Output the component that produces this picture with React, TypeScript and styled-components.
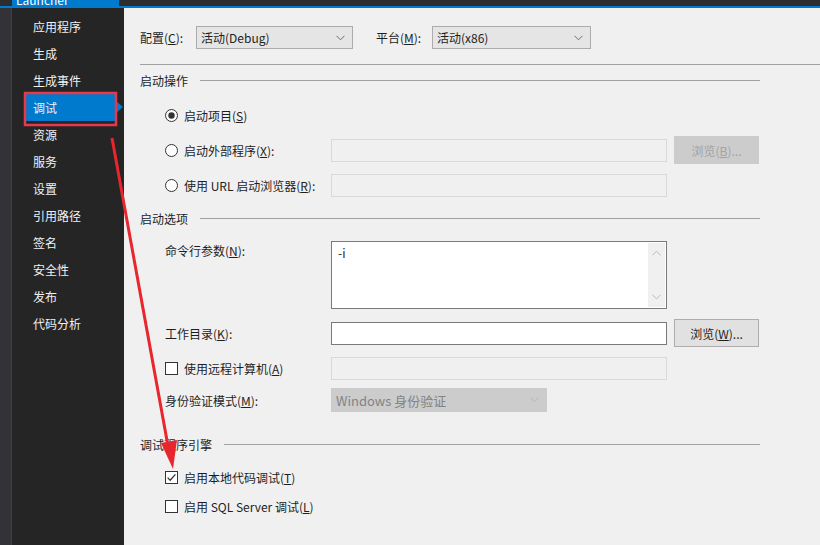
import React from "react"
import styled, { createGlobalStyle } from "styled-components"

const GlobalStyle = createGlobalStyle`
  html, body {
    margin: 0;
    padding: 0;
    background: #f0f0f0;
  }
  body {
    font-family: "Noto Sans CJK SC", "Microsoft YaHei", sans-serif;
    font-size: 12px;
    color: #1e1e1e;
  }
`

const navItems = [
  "应用程序",
  "生成",
  "生成事件",
  "调试",
  "资源",
  "服务",
  "设置",
  "引用路径",
  "签名",
  "安全性",
  "发布",
  "代码分析",
]

const Key = ({ k }: { k: string }) => <u>{k}</u>

const ChevronDown = ({ color = "#6d6d6d" }: { color?: string }) => (
  <svg width="9" height="6" viewBox="0 0 9 6">
    <path d="M0.5 0.8 L4.5 4.8 L8.5 0.8" fill="none" stroke={color} strokeWidth="1" />
  </svg>
)

const RadioMark = ({ checked }: { checked?: boolean }) => (
  <svg width="13" height="13" viewBox="0 0 13 13">
    <circle cx="6.5" cy="6.5" r="6" fill="#fff" stroke="#333" strokeWidth="1" />
    {checked && <circle cx="6.5" cy="6.5" r="3.2" fill="#333" />}
  </svg>
)

const CheckMark = ({ checked }: { checked?: boolean }) => (
  <svg width="13" height="13" viewBox="0 0 13 13">
    <rect x="0.5" y="0.5" width="12" height="12" fill="#fff" stroke="#333" strokeWidth="1" />
    {checked && (
      <path d="M2.6 6.6 L5.2 9.2 L10.4 3.4" fill="none" stroke="#333" strokeWidth="1.3" />
    )}
  </svg>
)

const App = () => {
  return (
    <>
      <GlobalStyle />
      <Window>
        <TabBar>
          <Tab>Launcher</Tab>
        </TabBar>
        <Body>
          <Rail />
          <Sidebar>
            {navItems.map((item) => (
              <NavItem key={item} $active={item === "调试"}>
                {item}
                {item === "调试" && <Pointer />}
              </NavItem>
            ))}
          </Sidebar>
          <Content>
            <Toolbar>
              <Label>
                配置(<Key k="C" />):
              </Label>
              <Select $width={157}>
                <span>活动(Debug)</span>
                <ChevronDown />
              </Select>
              <Label $gap={23}>
                平台(<Key k="M" />):
              </Label>
              <Select $width={159}>
                <span>活动(x86)</span>
                <ChevronDown />
              </Select>
            </Toolbar>
            <Rule />

            <Group>
              <GroupTitle>
                <span>启动操作</span>
                <GroupLine />
              </GroupTitle>
              <OptionList>
                <FieldRow>
                  <Choice>
                    <RadioMark checked />
                    <span>
                      启动项目(<Key k="S" />)
                    </span>
                  </Choice>
                </FieldRow>
                <FieldRow>
                  <Choice>
                    <RadioMark />
                    <span>
                      启动外部程序(<Key k="X" />):
                    </span>
                  </Choice>
                  <TextBox $disabled />
                  <Button $disabled>
                    浏览(<Key k="B" />)...
                  </Button>
                </FieldRow>
                <FieldRow>
                  <Choice>
                    <RadioMark />
                    <span>
                      使用 URL 启动浏览器(<Key k="R" />):
                    </span>
                  </Choice>
                  <TextBox $disabled />
                </FieldRow>
              </OptionList>
            </Group>

            <Group $top={11}>
              <GroupTitle>
                <span>启动选项</span>
                <GroupLine />
              </GroupTitle>
              <ArgsRow>
                <FieldLabel $top={1}>
                  命令行参数(<Key k="N" />):
                </FieldLabel>
                <TextArea>
                  <span>-i</span>
                  <ScrollTrack>
                    <ChevronDown color="#b8b8b8" />
                    <ChevronDown color="#b8b8b8" />
                  </ScrollTrack>
                </TextArea>
              </ArgsRow>
              <FieldRow $top={10}>
                <FieldLabel>
                  工作目录(<Key k="K" />):
                </FieldLabel>
                <TextBox />
                <Button>
                  浏览(<Key k="W" />)...
                </Button>
              </FieldRow>
              <FieldRow $top={7}>
                <FieldLabel>
                  <Choice>
                    <CheckMark />
                    <span>
                      使用远程计算机(<Key k="A" />)
                    </span>
                  </Choice>
                </FieldLabel>
                <TextBox $disabled />
              </FieldRow>
              <FieldRow $top={4}>
                <FieldLabel>
                  身份验证模式(<Key k="M" />):
                </FieldLabel>
                <Select $width={216} $disabled>
                  <span>Windows 身份验证</span>
                  <ChevronDown color="#b5b5b5" />
                </Select>
              </FieldRow>
            </Group>

            <Group $top={22}>
              <GroupTitle>
                <span>调试程序引擎</span>
                <GroupLine />
              </GroupTitle>
              <CheckList>
                <Choice>
                  <CheckMark checked />
                  <span>
                    启用本地代码调试(<Key k="T" />)
                  </span>
                </Choice>
                <Choice>
                  <CheckMark />
                  <span>
                    启用 SQL Server 调试(<Key k="L" />)
                  </span>
                </Choice>
              </CheckList>
            </Group>
          </Content>
        </Body>

        <Annotation width="820" height="545" viewBox="0 0 820 545">
          <rect x="25" y="93" width="91" height="32" fill="none" stroke="#e8394a" strokeWidth="2.5" />
          <line x1="112" y1="138" x2="168" y2="446" stroke="#e8262d" strokeWidth="3" />
          <polygon points="161,443 177,440 173,469" fill="#e8262d" />
        </Annotation>
      </Window>
    </>
  )
}

export default App

const Window = styled.div`
  position: relative;
  width: 820px;
  height: 545px;
  overflow: hidden;
  background: #f0f0f0;
  display: flex;
  flex-direction: column;
`

const TabBar = styled.div`
  height: 6px;
  flex: none;
  display: flex;
  padding-left: 12px;
  background: #2d2d30;
  border-bottom: 2px solid #007acc;
  overflow: hidden;
`

const Tab = styled.div`
  width: 103px;
  background: #007acc;
  color: #fff;
  font-size: 12px;
  line-height: 0;
  padding-left: 4px;
  overflow: hidden;
`

const Body = styled.div`
  flex: 1;
  display: grid;
  grid-template-columns: 12px 112px 1fr;
  min-height: 0;
`

const Rail = styled.div`
  background: #333337;
  border-right: 1px solid #3f3f46;
`

const Sidebar = styled.div`
  background: #252526;
  padding-top: 5px;
  display: flex;
  flex-direction: column;
`

const NavItem = styled.div<{ $active?: boolean }>`
  position: relative;
  height: 27px;
  line-height: 27px;
  margin-left: 12px;
  margin-right: 8px;
  padding-left: 9px;
  color: #f1f1f1;
  font-size: 12px;
  background: ${(p) => (p.$active ? "#007acc" : "transparent")};
`

const Pointer = styled.span`
  position: absolute;
  right: -7px;
  top: 7px;
  width: 0;
  height: 0;
  border-top: 6px solid transparent;
  border-bottom: 6px solid transparent;
  border-left: 7px solid #007acc;
`

const Content = styled.div`
  padding: 18px 0 0 16px;
  display: flex;
  flex-direction: column;
  min-width: 0;
`

const Toolbar = styled.div`
  display: flex;
  align-items: center;
  height: 23px;
`

const Label = styled.span<{ $gap?: number }>`
  margin-left: ${(p) => p.$gap ?? 0}px;
  width: 56px;
  flex: none;
  white-space: nowrap;
`

const Select = styled.div<{ $width: number; $disabled?: boolean }>`
  box-sizing: border-box;
  width: ${(p) => p.$width}px;
  height: ${(p) => (p.$disabled ? 24 : 23)}px;
  flex: none;
  display: flex;
  align-items: center;
  justify-content: space-between;
  padding: 0 7px 0 4px;
  background: ${(p) => (p.$disabled ? "#cccccc" : "#e5e5e5")};
  border: 1px solid ${(p) => (p.$disabled ? "#cccccc" : "#acacac")};
  color: ${(p) => (p.$disabled ? "#838383" : "#1e1e1e")};
  font-size: ${(p) => (p.$disabled ? 13 : 12)}px;
`

const Rule = styled.div`
  margin-top: 15px;
  height: 1px;
  background: #a0a0a0;
`

const Group = styled.div<{ $top?: number }>`
  width: 620px;
  margin-top: ${(p) => p.$top ?? 7}px;
  display: flex;
  flex-direction: column;
`

const GroupTitle = styled.div`
  height: 16px;
  display: flex;
  align-items: center;
  gap: 12px;
  white-space: nowrap;
`

const GroupLine = styled.div`
  flex: 1;
  height: 1px;
  background: #a0a0a0;
`

const OptionList = styled.div`
  margin-top: 13px;
  display: flex;
  flex-direction: column;
  gap: 7px;
`

const FieldRow = styled.div<{ $top?: number }>`
  margin-top: ${(p) => p.$top ?? 0}px;
  padding-left: 25px;
  height: 28px;
  display: grid;
  grid-template-columns: 166px 336px 92px;
  align-items: center;

  & > :nth-child(3) {
    margin-left: 7px;
  }
`

const Choice = styled.label`
  display: flex;
  align-items: center;
  gap: 6px;
  white-space: nowrap;
`

const TextBox = styled.div<{ $disabled?: boolean }>`
  box-sizing: border-box;
  width: 336px;
  height: 23px;
  background: ${(p) => (p.$disabled ? "#f0f0f0" : "#ffffff")};
  border: 1px solid ${(p) => (p.$disabled ? "#d9d9d9" : "#7a7a7a")};
`

const Button = styled.div<{ $disabled?: boolean }>`
  box-sizing: border-box;
  width: 85px;
  height: 28px;
  display: flex;
  align-items: center;
  justify-content: center;
  background: ${(p) => (p.$disabled ? "#cccccc" : "#e1e1e1")};
  border: 1px solid ${(p) => (p.$disabled ? "#cccccc" : "#adadad")};
  color: ${(p) => (p.$disabled ? "#a3a3a3" : "#1e1e1e")};
  white-space: nowrap;
`

const ArgsRow = styled.div`
  margin-top: 15px;
  padding-left: 25px;
  display: grid;
  grid-template-columns: 166px 336px;
  align-items: start;
`

const FieldLabel = styled.div<{ $top?: number }>`
  padding-top: ${(p) => p.$top ?? 0}px;
  white-space: nowrap;
`

const TextArea = styled.div`
  position: relative;
  box-sizing: border-box;
  width: 336px;
  height: 68px;
  background: #fff;
  border: 1px solid #7a7a7a;
  padding: 2px 6px;
  line-height: 17px;
`

const ScrollTrack = styled.div`
  position: absolute;
  top: 1px;
  right: 1px;
  bottom: 1px;
  width: 17px;
  background: #f0f0f0;
  display: flex;
  flex-direction: column;
  justify-content: space-between;
  align-items: center;
  padding: 7px 0;
  box-sizing: border-box;

  & > svg:first-child {
    transform: rotate(180deg);
  }
`

const CheckList = styled.div`
  margin-top: 15px;
  padding-left: 25px;
  display: flex;
  flex-direction: column;
  gap: 9px;

  & > label {
    height: 20px;
  }
`

const Annotation = styled.svg`
  position: absolute;
  left: 0;
  top: 0;
  pointer-events: none;
`
